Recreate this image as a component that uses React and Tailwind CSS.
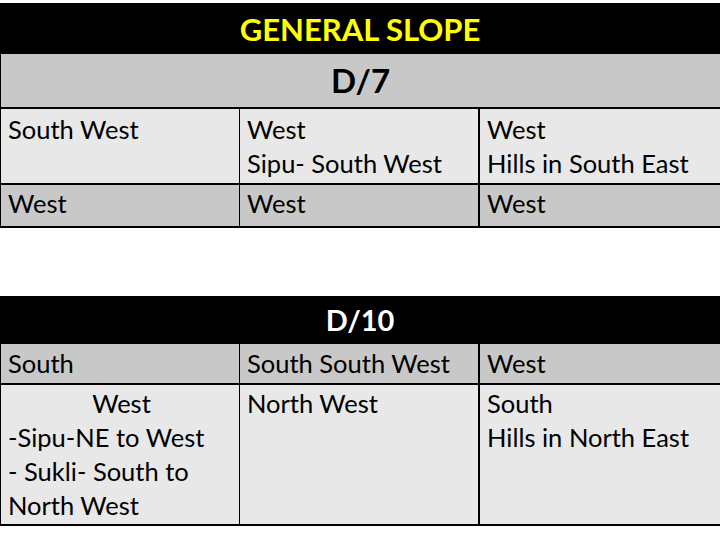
import React from "react";

const cell =
  "pl-[7px] pr-1 text-[25.5px] leading-[34px] text-black whitespace-nowrap";

const Row = ({ cells, bg, pt = "pt-[1px]", h }) => (
  <div className={`grid grid-cols-[240px_240px_240px] border-t-2 border-black ${bg} ${h}`}>
    {cells.map((lines, i) => (
      <div
        key={i}
        className={`${cell} ${pt} ${i === 0 ? "border-l border-black" : ""} ${
          i === 0 ? "border-r border-black" : i === 1 ? "border-r-2 border-black" : ""
        }`}
      >
        {lines.map((line, j) => (
          <div key={j} className={line.center ? "text-center" : ""}>
            {line.text ?? line}
          </div>
        ))}
      </div>
    ))}
  </div>
);

export default function App() {
  return (
    <div
      className="w-[720px] h-[540px] bg-white pt-[3px] overflow-hidden"
      style={{ fontFamily: "Lato, 'Noto Sans', sans-serif" }}
    >
      <div className="h-[51px] bg-black flex items-center justify-center text-[#ffff00] font-bold text-[31px] pt-[1px]">
        GENERAL SLOPE
      </div>
      <div className="h-[53px] bg-[#c8c8c8] border-l border-black flex items-center justify-center font-bold text-[33px] text-black">
        D/7
      </div>
      <Row
        bg="bg-[#e8e8e8]"
        h="h-[76px]"
        pt="pt-[3px]"
        cells={[["South West"], ["West", "Sipu- South West"], ["West", "Hills in South East"]]}
      />
      <Row
        bg="bg-[#c8c8c8]"
        h="h-[43px]"
        cells={[["West"], ["West"], ["West"]]}
      />
      <div className="border-t-2 border-black w-[720px]" />

      <div className="mt-[68px] h-[48px] bg-black flex items-center justify-center font-bold text-[29px] text-white">
        D/10
      </div>
      <div className="grid grid-cols-[240px_240px_240px] bg-[#c8c8c8] h-[39px]">
        {[["South"], ["South South West"], ["West"]].map((lines, i) => (
          <div
            key={i}
            className={`${cell} pt-[2px] ${i === 0 ? "border-l border-black" : ""} ${
              i === 0 ? "border-r border-black" : i === 1 ? "border-r-2 border-black" : ""
            }`}
          >
            {lines[0]}
          </div>
        ))}
      </div>
      <Row
        bg="bg-[#e8e8e8]"
        h="h-[141px]"
        cells={[
          [{ text: "West", center: true }, "-Sipu-NE to West", "- Sukli- South to", "North West"],
          ["North West"],
          ["South", "Hills in North East"],
        ]}
      />
      <div className="border-t-2 border-black w-[720px]" />
    </div>
  );
}
